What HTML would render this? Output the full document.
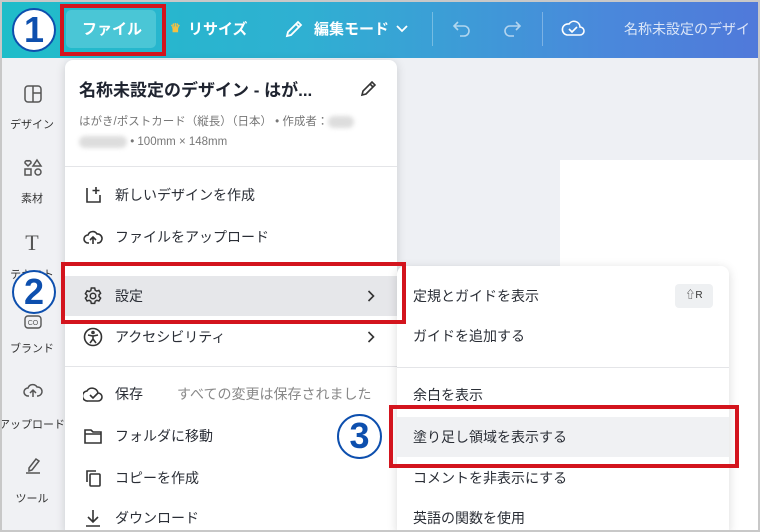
<!DOCTYPE html>
<html style="width:760px;height:532px;overflow:hidden"><head><meta charset="utf-8"><style>
*{box-sizing:border-box;margin:0;padding:0}
body{width:760px;height:532px;overflow:hidden;position:relative;font-family:"Liberation Sans","Noto Sans CJK JP",sans-serif;background:#eef0f4;color:#1f2430}
.frame{position:absolute;inset:0;border:2px solid #c8c8c8;z-index:50;pointer-events:none}
.top{position:absolute;left:0;top:0;width:760px;height:58px;background:linear-gradient(90deg,#1fbdc9 0%,#2fb0d2 40%,#4a88db 80%,#5079da 100%)}
.top .t{position:absolute;color:#fff;font-weight:bold;font-size:15px;top:18px}
.side{position:absolute;left:0;top:58px;width:64px;height:474px;background:#f0f1f4}
.side .l{position:absolute;width:64px;text-align:center;font-size:11px;color:#333}
.page{position:absolute;left:560px;top:160px;width:200px;height:372px;background:#fff}
.menu{position:absolute;left:65px;top:60px;width:332px;height:472px;background:#fff;border-radius:8px 8px 0 0;box-shadow:0 2px 10px rgba(0,0,0,.15);overflow:hidden}
.sub{position:absolute;left:397px;top:266px;width:332px;height:266px;background:#fff;border-radius:8px 8px 0 0;box-shadow:0 2px 10px rgba(0,0,0,.15);overflow:hidden}
.it{position:absolute;left:0;width:100%;height:40px;font-size:14px;color:#2a2e36;line-height:40px;padding-left:50px}
.sub .it{padding-left:16px}
.ic{position:absolute;left:18px;top:10px;width:20px;height:20px}
.div{position:absolute;left:0;width:100%;height:1px;background:#e4e5e8}
.red{position:absolute;border:4px solid #d3141d;z-index:20}
.num{position:absolute;border-radius:50%;background:#fff;border:2.5px solid #0d4fae;color:#0d4fae;font-weight:bold;text-align:center;z-index:30;font-family:"Liberation Sans",sans-serif}
.chev{position:absolute;right:22px;top:14px}
</style></head><body>
<div class="top">
 <div style="position:absolute;left:66px;top:10px;width:90px;height:38px;background:#4ac6d6;border-radius:5px"></div>
 <div class="t" style="left:82px">ファイル</div>
 <div class="t" style="left:170px;color:#f4c042;font-size:12px;top:21px">♛</div>
 <div class="t" style="left:188px">リサイズ</div>
 <svg style="position:absolute;left:283px;top:18px" width="22" height="22" viewBox="0 0 22 22" fill="none" stroke="#fff" stroke-width="1.8"><path d="M4 18l1-4L15 4l3 3L8 17z M13 6l3 3"/></svg>
 <div class="t" style="left:314px">編集モード</div>
 <svg style="position:absolute;left:396px;top:24px" width="12" height="10"><path d="M1 2l5 5 5-5" stroke="#fff" stroke-width="1.8" fill="none"/></svg>
 <div style="position:absolute;left:432px;top:12px;width:1px;height:34px;background:rgba(255,255,255,.3)"></div>
 <svg style="position:absolute;left:452px;top:18px" width="22" height="22" fill="none" stroke="rgba(255,255,255,.6)" stroke-width="1.6"><path d="M6 4L2 8l4 4M2 8h10a5 5 0 010 10H8"/></svg>
 <svg style="position:absolute;left:500px;top:18px" width="22" height="22" fill="none" stroke="rgba(255,255,255,.6)" stroke-width="1.6"><path d="M16 4l4 4-4 4M20 8H10a5 5 0 000 10h4"/></svg>
 <div style="position:absolute;left:542px;top:12px;width:1px;height:34px;background:rgba(255,255,255,.3)"></div>
 <svg style="position:absolute;left:560px;top:16px" width="26" height="24" fill="none" stroke="#fff" stroke-width="1.6"><path d="M7 19h13a4 4 0 000-8 6 6 0 00-11-3 5 5 0 00-2 11z M9 13l3 3 5-5"/></svg>
 <div class="t" style="left:624px;font-weight:normal;font-size:14px;top:19px;color:rgba(255,255,255,.8);white-space:nowrap">名称未設定のデザイ</div>
</div>
<div class="side">
 <svg style="position:absolute;left:23px;top:26px" width="20" height="20" fill="none" stroke="#555" stroke-width="1.5"><rect x="2" y="2" width="16" height="16" rx="3"/><path d="M10 2v16M10 9h8"/></svg>
 <div class="l" style="top:58px">デザイン</div>
 <svg style="position:absolute;left:23px;top:100px" width="20" height="20" fill="none" stroke="#555" stroke-width="1.5"><path d="M5 8L2 5a2 2 0 013-2l0 0a2 2 0 013 2z M14 2l4 6h-8z"/><rect x="2" y="11" width="6" height="6"/><circle cx="15" cy="14" r="3"/></svg>
 <div class="l" style="top:132px">素材</div>
 <div class="l" style="top:172px;font-size:22px;font-family:'Liberation Serif',serif;color:#555">T</div>
 <div class="l" style="top:208px">テキスト</div>
 <svg style="position:absolute;left:23px;top:256px" width="20" height="16" fill="none" stroke="#555" stroke-width="1.4"><rect x="2" y="2" width="16" height="12" rx="3"/><text x="10" y="11" font-size="7" text-anchor="middle" fill="#555" stroke="none" font-family="Liberation Sans">CO</text></svg>
 <div class="l" style="top:282px">ブランド</div>
 <svg style="position:absolute;left:23px;top:323px" width="20" height="18" fill="none" stroke="#555" stroke-width="1.5"><path d="M6 15H5a4 4 0 010-8 5 5 0 019-1 4 4 0 011 9h-1M10 16V9M7 12l3-3 3 3"/></svg>
 <div class="l" style="top:358px;left:-4px;width:72px">アップロード</div>
 <svg style="position:absolute;left:23px;top:398px" width="20" height="20" fill="none" stroke="#555" stroke-width="1.5"><path d="M6 12l7-9 3 2-7 9-3 1z M3 17h14"/></svg>
 <div class="l" style="top:432px">ツール</div>
</div>
<div class="page"></div>

<div class="menu">
 <div style="position:absolute;left:14px;top:16px;font-size:17px;font-weight:bold;color:#1f2430">名称未設定のデザイン - はが...</div>
 <svg style="position:absolute;left:294px;top:18px" width="20" height="20" fill="none" stroke="#333" stroke-width="1.6"><path d="M3 17l1-4L13 4l3 3-9 9z M11 6l3 3"/></svg>
 <div style="position:absolute;left:14px;top:53px;font-size:11.5px;color:#777">はがき/ポストカード（縦長）（日本） • 作成者：<span style="display:inline-block;width:26px;height:12px;background:#ddd;border-radius:6px;filter:blur(2px);vertical-align:middle"></span></div>
 <div style="position:absolute;left:14px;top:76px;font-size:11.5px;color:#777"><span style="display:inline-block;width:48px;height:12px;background:#ddd;border-radius:6px;filter:blur(2px);vertical-align:middle"></span> • 100mm × 148mm</div>
 <div class="div" style="top:106px"></div>
 <div class="it" style="top:115px"><svg class="ic" viewBox="0 0 20 20" fill="none" stroke="#333" stroke-width="1.6"><path d="M4 3v14h13V10 M13 2v7M9.5 5.5h7"/></svg>新しいデザインを作成</div>
 <div class="it" style="top:157px"><svg class="ic" viewBox="0 0 20 20" fill="none" stroke="#333" stroke-width="1.6"><path d="M6 16H5a4 4 0 010-8 5 5 0 019-1 4 4 0 011 9h-1M10 17v-7M7 13l3-3 3 3"/></svg>ファイルをアップロード</div>
 <div class="it" style="top:216px;background:#e6e7ea"><svg class="ic" viewBox="0 0 20 20" fill="none" stroke="#333" stroke-width="1.5"><circle cx="10" cy="10" r="2.8"/><path d="M8.3 2h3.4l.5 2.2 1.6.9 2.1-.7 1.7 2.9-1.6 1.5v1.8l1.6 1.5-1.7 2.9-2.1-.7-1.6.9-.5 2.2H8.3l-.5-2.2-1.6-.9-2.1.7-1.7-2.9 1.6-1.5V9.2L2.4 7.7l1.7-2.9 2.1.7 1.6-.9z"/></svg>設定<svg class="chev" width="8" height="12" fill="none" stroke="#333" stroke-width="1.6"><path d="M1.5 1l5 5-5 5"/></svg></div>
 <div class="it" style="top:257px"><svg class="ic" viewBox="0 0 20 20" fill="none" stroke="#333" stroke-width="1.6"><circle cx="10" cy="10" r="8.5"/><circle cx="10" cy="5.5" r="1"/><path d="M5 8l5 1 5-1M10 9v3l-3 4M10 12l3 4"/></svg>アクセシビリティ<svg class="chev" width="8" height="12" fill="none" stroke="#333" stroke-width="1.6"><path d="M1.5 1l5 5-5 5"/></svg></div>
 <div class="div" style="top:306px"></div>
 <div class="it" style="top:314px"><svg class="ic" viewBox="0 0 20 20" fill="none" stroke="#333" stroke-width="1.6"><path d="M5 17h10a4 4 0 000-8 6 6 0 00-11-2 5 5 0 001 10z M7 11l3 3 5-5"/></svg>保存<span style="position:absolute;left:112px;color:#888">すべての変更は保存されました</span></div>
 <div class="it" style="top:356px"><svg class="ic" viewBox="0 0 20 20" fill="none" stroke="#333" stroke-width="1.6"><path d="M2 4h6l2 2h8v11H2z M2 8h16"/></svg>フォルダに移動</div>
 <div class="it" style="top:398px"><svg class="ic" viewBox="0 0 20 20" fill="none" stroke="#333" stroke-width="1.6"><path d="M4 14V3h9"/><rect x="7" y="6" width="10" height="12" rx="1"/></svg>コピーを作成</div>
 <div class="it" style="top:438px"><svg class="ic" viewBox="0 0 20 20" fill="none" stroke="#333" stroke-width="1.6"><path d="M10 2v12M5 9l5 5 5-5M3 18h14"/></svg>ダウンロード</div>
</div>

<div class="sub">
 <div class="it" style="top:10px">定規とガイドを表示<span style="position:absolute;right:16px;top:8px;height:24px;width:38px;background:#eef0f2;border-radius:4px;font-size:10px;text-align:center;line-height:24px;color:#333">⇧R</span></div>
 <div class="it" style="top:50px">ガイドを追加する</div>
 <div class="div" style="top:101px"></div>
 <div class="it" style="top:109px">余白を表示</div>
 <div class="it" style="top:151px;background:#f0f1f3">塗り足し領域を表示する</div>
 <div class="it" style="top:192px">コメントを非表示にする</div>
 <div class="it" style="top:232px">英語の関数を使用</div>
</div>

<div class="red" style="left:60px;top:4px;width:106px;height:52px"></div>
<div class="red" style="left:61px;top:262px;width:345px;height:62px"></div>
<div class="red" style="left:389px;top:405px;width:350px;height:63px"></div>

<div class="num" style="left:12px;top:8px;width:44px;height:44px;font-size:36px;line-height:39px">1</div>
<div class="num" style="left:12px;top:270px;width:44px;height:44px;font-size:36px;line-height:39px">2</div>
<div class="num" style="left:337px;top:414px;width:45px;height:45px;font-size:36px;line-height:40px">3</div>
<div class="frame"></div>
</body></html>
